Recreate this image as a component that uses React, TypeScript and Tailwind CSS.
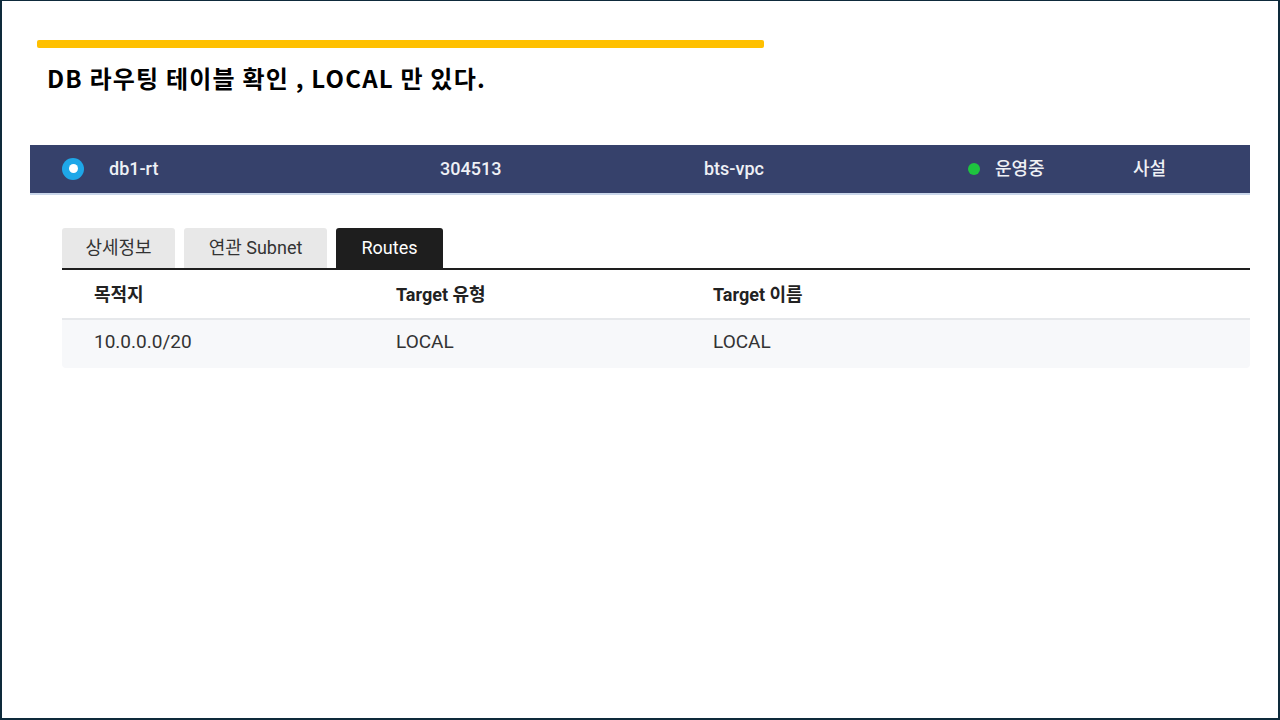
import React from 'react';

const rows = [{ dest: '10.0.0.0/20', type: 'LOCAL', name: 'LOCAL' }];

const tabs = [
  { label: '상세정보', width: 'w-[113px]', active: false },
  { label: '연관 Subnet', width: 'w-[143px]', active: false },
  { label: 'Routes', width: 'w-[107px]', active: true },
];

const App = () => {
  return (
    <div className="w-[1280px] h-[720px] bg-white border-l-2 border-r-2 border-t border-b-2 border-[#0e2a3b] overflow-hidden font-['Roboto','Noto_Sans_CJK_KR',sans-serif]">
      <div className="ml-[35px] mt-[39px] w-[727px] h-[8px] rounded-[2px] bg-[#ffc000]" />
      <h1 className="ml-[45px] mt-[14px] text-[24px] leading-[32px] font-bold text-black font-['Noto_Sans_CJK_KR',sans-serif] tracking-[1.2px]">
        DB 라우팅 테이블 확인 , LOCAL 만 있다.
      </h1>

      <div className="ml-[28px] mt-[51px] w-[1220px] h-[50px] pb-[1px] bg-[#36416b] border-b-2 border-[#c9d6ea] flex items-center text-[18px] font-medium text-[#eef0f5]">
        <div className="w-[79px] flex justify-end pr-[25px]">
          <div className="w-[22px] h-[22px] rounded-full bg-[#1ea7e8] flex items-center justify-center">
            <div className="w-[9px] h-[9px] rounded-full bg-white" />
          </div>
        </div>
        <span className="w-[331px]">db1-rt</span>
        <span className="w-[264px]">304513</span>
        <span className="w-[264px]">bts-vpc</span>
        <span className="w-[165px] flex items-center gap-[15px]">
          <span className="w-[12px] h-[12px] rounded-full bg-[#1ec43f]" />
          운영중
        </span>
        <span>사설</span>
      </div>

      <div className="ml-[60px] mt-[33px] w-[1188px]">
        <div className="flex gap-[9px] items-end">
          {tabs.map((tab) => (
            <div
              key={tab.label}
              className={`${tab.width} h-[40px] pb-[2px] rounded-t-[3px] flex items-center justify-center text-[18px] ${tab.active ? 'bg-[#1e1e1e] text-white' : 'bg-[#e8e8e8] text-[#333]'}`}
            >
              {tab.label}
            </div>
          ))}
        </div>
        <div className="h-[2px] bg-[#1e1e1e]" />
        <div className="grid grid-cols-[302px_317px_1fr] pl-[32px] h-[50px] items-center border-b-2 border-[#e6e8eb] text-[18px] font-bold text-[#222]">
          <span>목적지</span>
          <span>Target 유형</span>
          <span>Target 이름</span>
        </div>
        {rows.map((row) => (
          <div key={row.dest} className="grid grid-cols-[302px_317px_1fr] pl-[32px] h-[48px] pb-[3px] items-center bg-[#f7f8fa] rounded-b-[4px] text-[19px] text-[#333]">
            <span>{row.dest}</span>
            <span>{row.type}</span>
            <span>{row.name}</span>
          </div>
        ))}
      </div>
    </div>
  );
};

export default App;
